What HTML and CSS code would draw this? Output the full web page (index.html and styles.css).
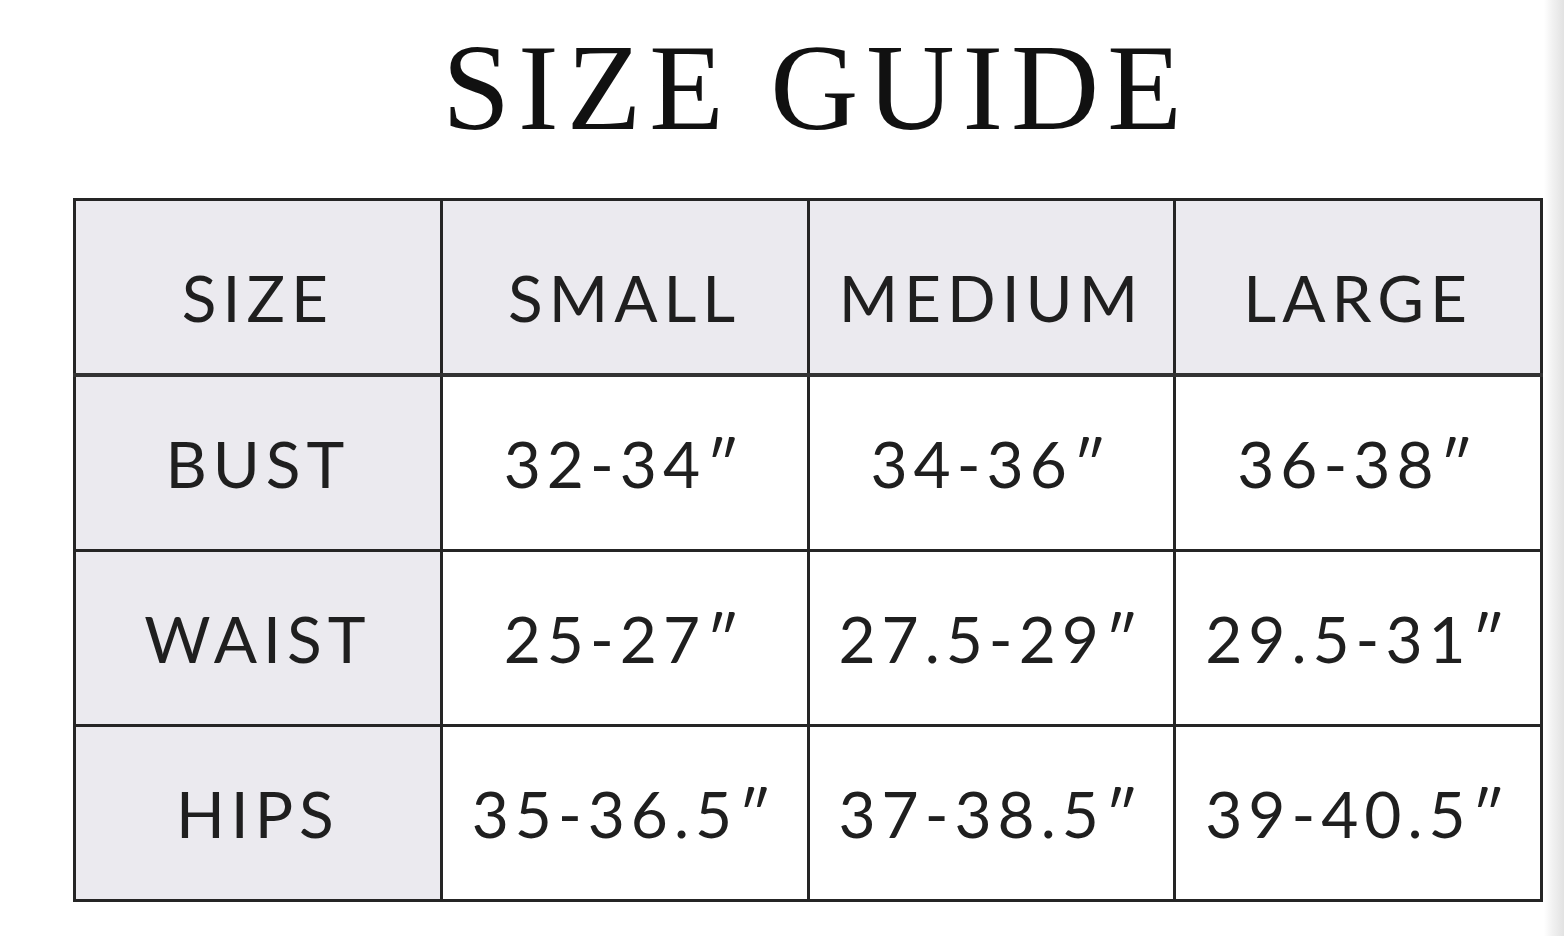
FILE: index.html
```html
<!DOCTYPE html>
<html>
<head>
<meta charset="utf-8">
<link rel="stylesheet" href="styles.css">
</head>
<body>
<div class="page">
  <h1 class="title">SIZE GUIDE</h1>
  <table class="chart">
    <tr class="head">
      <th class="label">SIZE</th>
      <th>SMALL</th>
      <th>MEDIUM</th>
      <th>LARGE</th>
    </tr>
    <tr>
      <th class="label">BUST</th>
      <td>32-34″</td>
      <td>34-36″</td>
      <td>36-38″</td>
    </tr>
    <tr>
      <th class="label">WAIST</th>
      <td>25-27″</td>
      <td>27.5-29″</td>
      <td>29.5-31″</td>
    </tr>
    <tr>
      <th class="label">HIPS</th>
      <td>35-36.5″</td>
      <td>37-38.5″</td>
      <td>39-40.5″</td>
    </tr>
  </table>
</div>
</body>
</html>
```
FILE: styles.css
```css
html, body {
  margin: 0;
  padding: 0;
}
body {
  width: 1564px;
  height: 936px;
  overflow: hidden;
  background: linear-gradient(to right, #ffffff 0, #ffffff 1544px, #f2f2f2 1552px, #e2e2e2 1564px);
  color: #222;
}
.page {
  padding-top: 27px;
  padding-left: 73px;
}
.title {
  margin: 0;
  width: 1486px;
  text-align: center;
  font-family: "Liberation Serif", "DejaVu Serif", serif;
  font-weight: normal;
  font-size: 122px;
  line-height: 122px;
  letter-spacing: 8px;
  color: #111;
  height: 171px;
}
.chart {
  border-collapse: collapse;
  table-layout: fixed;
  width: 1470px;
  font-family: "Lato", "DejaVu Sans", sans-serif;
  font-size: 64px;
  letter-spacing: 6px;
  color: #1f1f1f;
}
.chart th, .chart td {
  border: 3px solid #252525;
  height: 172px;
  padding: 0;
  text-align: center;
  vertical-align: middle;
  font-weight: normal;
}
.chart .head th {
  background: #ebeaef;
  padding-top: 20px;
  height: 152px;
  border-bottom: 4px solid #333;
}
.chart .label {
  background: #ebeaef;
}
```
